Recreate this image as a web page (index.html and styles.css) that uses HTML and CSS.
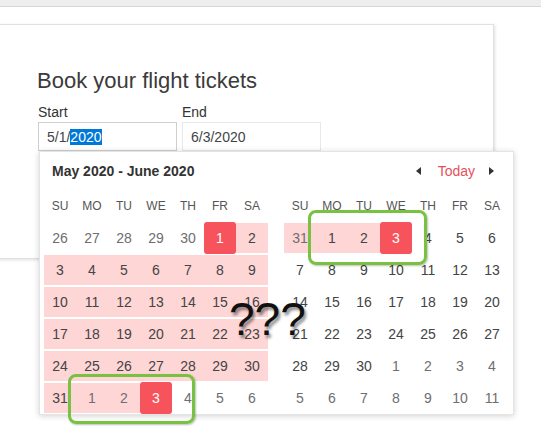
FILE: index.html
```html
<!DOCTYPE html>
<html>
<head>
<meta charset="utf-8">
<link rel="stylesheet" href="styles.css">
</head>
<body>
<div class="topbar"></div>
<div class="card">
  <h1 class="title">Book your flight tickets</h1>
  <div class="fields">
    <div class="field">
      <label class="label">Start</label>
      <div class="input focused">5/1/<span class="sel">2020</span></div>
    </div>
    <div class="field">
      <label class="label">End</label>
      <div class="input">6/3/2020</div>
    </div>
  </div>
</div>

<div class="picker">
  <div class="picker-head">
    <span class="range-title">May 2020 - June 2020</span>
    <div class="nav">
      <span class="arrow arrow-left"></span>
      <span class="today">Today</span>
      <span class="arrow arrow-right"></span>
    </div>
  </div>
  <div class="months">
    <div class="month">
      <div class="dow">SU</div><div class="dow">MO</div><div class="dow">TU</div><div class="dow">WE</div><div class="dow">TH</div><div class="dow">FR</div><div class="dow">SA</div>
      <div class="day out">26</div><div class="day out">27</div><div class="day out">28</div><div class="day out">29</div><div class="day out">30</div><div class="day edge">1</div><div class="day range">2</div>
      <div class="day range">3</div><div class="day range">4</div><div class="day range">5</div><div class="day range">6</div><div class="day range">7</div><div class="day range">8</div><div class="day range">9</div>
      <div class="day range">10</div><div class="day range">11</div><div class="day range">12</div><div class="day range">13</div><div class="day range">14</div><div class="day range">15</div><div class="day range">16</div>
      <div class="day range">17</div><div class="day range">18</div><div class="day range">19</div><div class="day range">20</div><div class="day range">21</div><div class="day range">22</div><div class="day range">23</div>
      <div class="day range">24</div><div class="day range">25</div><div class="day range">26</div><div class="day range">27</div><div class="day range">28</div><div class="day range">29</div><div class="day range">30</div>
      <div class="day range">31</div><div class="day range out">1</div><div class="day range out">2</div><div class="day edge">3</div><div class="day out">4</div><div class="day out">5</div><div class="day out">6</div>
    </div>
    <div class="month">
      <div class="dow">SU</div><div class="dow">MO</div><div class="dow">TU</div><div class="dow">WE</div><div class="dow">TH</div><div class="dow">FR</div><div class="dow">SA</div>
      <div class="day range out">31</div><div class="day range">1</div><div class="day range">2</div><div class="day edge">3</div><div class="day">4</div><div class="day">5</div><div class="day">6</div>
      <div class="day">7</div><div class="day">8</div><div class="day">9</div><div class="day">10</div><div class="day">11</div><div class="day">12</div><div class="day">13</div>
      <div class="day">14</div><div class="day">15</div><div class="day">16</div><div class="day">17</div><div class="day">18</div><div class="day">19</div><div class="day">20</div>
      <div class="day">21</div><div class="day">22</div><div class="day">23</div><div class="day">24</div><div class="day">25</div><div class="day">26</div><div class="day">27</div>
      <div class="day">28</div><div class="day">29</div><div class="day">30</div><div class="day out">1</div><div class="day out">2</div><div class="day out">3</div><div class="day out">4</div>
      <div class="day out">5</div><div class="day out">6</div><div class="day out">7</div><div class="day out">8</div><div class="day out">9</div><div class="day out">10</div><div class="day out">11</div>
    </div>
  </div>
</div>

<div class="mark mark-left"></div>
<div class="mark mark-right"></div>
<div class="qqq">???</div>
</body>
</html>
```

FILE: styles.css
```css
html, body {
  margin: 0;
  padding: 0;
}
body {
  font-family: "Liberation Sans", Arial, sans-serif;
  background: #ffffff;
  position: relative;
  width: 541px;
  height: 447px;
  overflow: hidden;
}
.topbar {
  height: 6px;
  background: #eeeeee;
  border-bottom: 1px solid #d7d7d7;
}
.card {
  margin: 17px 0 0 -10px;
  width: 504px;
  height: 235px;
  box-sizing: border-box;
  border: 1px solid #e0e0e0;
  box-shadow: 1px 1px 3px rgba(0, 0, 0, 0.13);
  padding: 43px 0 0 47px;
}
.title {
  margin: 0 0 0 -1px;
  font-size: 22px;
  font-weight: normal;
  line-height: 26px;
  color: #3b3b3b;
}
.fields {
  display: flex;
  gap: 5px;
  margin-top: 10px;
}
.label {
  display: block;
  font-size: 14px;
  line-height: 17px;
  color: #333333;
}
.input {
  width: 139px;
  height: 29px;
  box-sizing: border-box;
  border: 1px solid #e8e8e8;
  padding-left: 8px;
  margin-top: 1px;
  font-size: 14px;
  line-height: 28px;
  color: #444444;
}
.input.focused {
  border-color: #cfcfcf;
}
.sel {
  background: #0078d7;
  color: #ffffff;
}

.picker {
  position: absolute;
  left: 39px;
  top: 151px;
  width: 475px;
  height: 264px;
  box-sizing: border-box;
  background: #ffffff;
  border: 1px solid #e4e4e4;
  box-shadow: 0 1px 6px rgba(0, 0, 0, 0.18);
  padding: 0 5px 0 4px;
}
.picker-head {
  height: 38px;
  display: flex;
  align-items: center;
  padding: 0 14px 0 8px;
}
.range-title {
  font-size: 14px;
  font-weight: bold;
  color: #333333;
}
.nav {
  margin-left: auto;
  display: flex;
  align-items: center;
}
.arrow {
  width: 0;
  height: 0;
  border-top: 4px solid transparent;
  border-bottom: 4px solid transparent;
}
.arrow-left {
  border-right: 5px solid #333333;
}
.arrow-right {
  border-left: 5px solid #333333;
}
.today {
  font-size: 14px;
  color: #e4525c;
  margin: 0 14px 0 17px;
}
.months {
  display: flex;
  gap: 16px;
}
.month {
  display: grid;
  grid-template-columns: repeat(7, 32px);
  grid-auto-rows: 32px;
}
.dow {
  font-size: 12px;
  color: #555555;
  text-align: center;
  line-height: 32px;
}
.day {
  box-sizing: border-box;
  padding: 1px 0;
  background-clip: content-box;
  font-size: 14px;
  color: #444444;
  text-align: center;
  line-height: 30px;
}
.day.out {
  color: #6e6e6e;
}
.day.range {
  background-color: #ffd6d6;
}
.day.edge {
  padding: 0;
  line-height: 32px;
  background-color: #f7535c;
  background-clip: border-box;
  border-radius: 3px;
  color: #ffffff;
}

.mark {
  position: absolute;
  box-sizing: border-box;
  border: 3px solid #79c140;
  border-radius: 8px;
  box-shadow: 1px 1px 2px rgba(0, 0, 0, 0.25);
}
.mark-left {
  left: 68px;
  top: 374px;
  width: 127px;
  height: 50px;
}
.mark-right {
  left: 308px;
  top: 210px;
  width: 119px;
  height: 55px;
}
.qqq {
  position: absolute;
  left: 229px;
  top: 296px;
  font-size: 46px;
  line-height: 46px;
  color: #111111;
  text-shadow: 2px 3px 3px rgba(0, 0, 0, 0.45);
}
```
